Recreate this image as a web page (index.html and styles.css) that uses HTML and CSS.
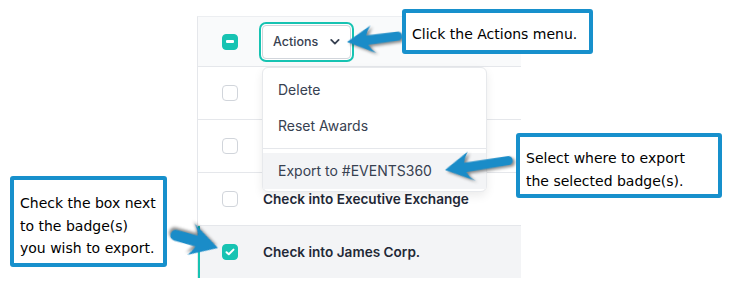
FILE: index.html
```html
<!DOCTYPE html>
<html>
<head>
<meta charset="utf-8">
<link rel="stylesheet" href="styles.css">
</head>
<body>
<div class="table">
  <div class="row head">
    <div class="cb-cell"><span class="cb cb-on"><span class="minus"></span></span></div>
    <div class="actions-wrap">
      <button class="actions">Actions
        <svg class="chev" width="12" height="8" viewBox="0 0 12 8"><path d="M1.5 1.5 L6 6 L10.5 1.5" fill="none" stroke="#374151" stroke-width="2.2" stroke-linecap="round" stroke-linejoin="round"/></svg>
      </button>
      <div class="menu">
        <div class="item">Delete</div>
        <div class="item">Reset Awards</div>
        <div class="divider"></div>
        <div class="item active">Export to #EVENTS360</div>
      </div>
    </div>
  </div>
  <div class="row"><div class="cb-cell"><span class="cb"></span></div></div>
  <div class="row"><div class="cb-cell"><span class="cb"></span></div></div>
  <div class="row"><div class="cb-cell"><span class="cb"></span></div><div class="name">Check into Executive Exchange</div></div>
  <div class="row selected"><div class="cb-cell"><span class="cb cb-on"><svg width="10" height="8" viewBox="0 0 10 8"><path d="M1.5 4.2 L3.8 6.3 L8.5 1.6" fill="none" stroke="#fff" stroke-width="2" stroke-linecap="round" stroke-linejoin="round"/></svg></span></div><div class="name">Check into James Corp.</div></div>
</div>

<svg class="arrows" width="739" height="303" viewBox="0 0 739 303">
  <g class="arrow" transform="translate(347 42) rotate(-6)">
    <path d="M0 0 L25 -14 Q21 -9 20 -4.5 L51 -5 A4.5 4.5 0 0 1 51 4 L21 5 Q23 10 28 14 Z"/>
  </g>
  <g class="arrow" transform="translate(445 170) rotate(-8)">
    <path d="M0 0 L25 -15 Q21 -9 20 -4.5 L64 -5 A4.5 4.5 0 0 1 64 4 L21 5 Q23 11 29 15 Z"/>
  </g>
  <g class="arrow" transform="translate(218 248) rotate(198)">
    <path d="M0 0 L27 -16 Q23 -10 22 -5.5 L44 -6.5 A5.5 5.5 0 0 1 44 4.5 L23 5.5 Q25 12 30 16 Z"/>
  </g>
</svg>

<div class="callout c1">Click the Actions menu.</div>
<div class="callout c2">Select where to export<br>the selected badge(s).</div>
<div class="callout c3">Check the box next<br>to the badge(s)<br>you wish to export.</div>
</body>
</html>
```

FILE: styles.css
```css
* { box-sizing: border-box; }
body {
  margin: 0;
  width: 739px;
  height: 303px;
  position: relative;
  overflow: hidden;
  background: #fff;
  font-family: Inter, "Noto Sans", sans-serif;
}
.table {
  margin: 16px 0 0 197px;
  width: 324px;
  border-left: 1px solid #e5e7eb;
  border-top: 1px solid #eceef1;
}
.row {
  display: flex;
  align-items: center;
  height: 53px;
  border-bottom: 1px solid #e5e7eb;
  background: #fff;
}
.row.head {
  height: 50px;
  background: #f9fafb;
}
.row.selected {
  height: 52px;
  border-bottom: none;
  background: #f3f4f6;
  box-shadow: inset 2px 0 0 #17c3b2;
}
.cb-cell {
  width: 64px;
  padding-left: 24px;
  display: flex;
  align-items: center;
}
.cb {
  width: 16px;
  height: 16px;
  border: 1px solid #d1d5db;
  border-radius: 4px;
  background: #fff;
  display: flex;
  align-items: center;
  justify-content: center;
}
.cb-on {
  border-color: #17c3b2;
  background: #17c3b2;
}
.minus {
  width: 8px;
  height: 2.5px;
  background: #fff;
  border-radius: 1px;
}
.name {
  padding-left: 1px;
  font-size: 13.6px;
  font-weight: 600;
  color: #1f2937;
}
.actions-wrap {
  position: relative;
}
.actions {
  display: flex;
  align-items: center;
  gap: 12px;
  height: 34px;
  width: 89px;
  padding: 0 10px 0 10px;
  border: 1px solid #d1d5db;
  border-radius: 4px;
  background: #fff;
  font-family: Inter, sans-serif;
  font-size: 12.5px;
  font-weight: 500;
  color: #374151;
  box-shadow: 0 0 0 1px #fff, 0 0 0 3px #17c3b2;
}
.chev { margin-top: 1px; }
.menu {
  position: absolute;
  top: 42px;
  left: 0;
  width: 225px;
  padding: 4px 0 2px;
  background: #fff;
  border: 1px solid #e7e9ec;
  border-radius: 6px;
  box-shadow: 0 4px 10px rgba(0, 0, 0, 0.08);
  z-index: 2;
}
.item {
  height: 36px;
  display: flex;
  align-items: center;
  padding-left: 15px;
  font-size: 14px;
  color: #374151;
}
.item.active { background: #f3f4f6; }
.divider {
  height: 1px;
  margin: 4px 0;
  background: #e5e7eb;
}
.arrows {
  position: absolute;
  left: 0;
  top: 0;
  z-index: 3;
  pointer-events: none;
}
.arrow path {
  fill: #1a8cc8;
  filter: drop-shadow(2px 2px 1.5px rgba(0, 0, 0, 0.45));
}
.callout {
  position: absolute;
  z-index: 4;
  background: #fff;
  border: 4px solid #1790cc;
  border-radius: 3px;
  font-family: "DejaVu Sans", Verdana, sans-serif;
  font-size: 14px;
  line-height: 22.5px;
  color: #000;
  padding: 0 0 0 6px;
}
.c1 { left: 402px; top: 9px; width: 191px; height: 45px; padding-top: 10px; }
.c2 { left: 516px; top: 133px; width: 206px; height: 65px; padding-top: 10px; }
.c3 { left: 10px; top: 176px; width: 157px; height: 91px; padding-top: 12px; }
```
